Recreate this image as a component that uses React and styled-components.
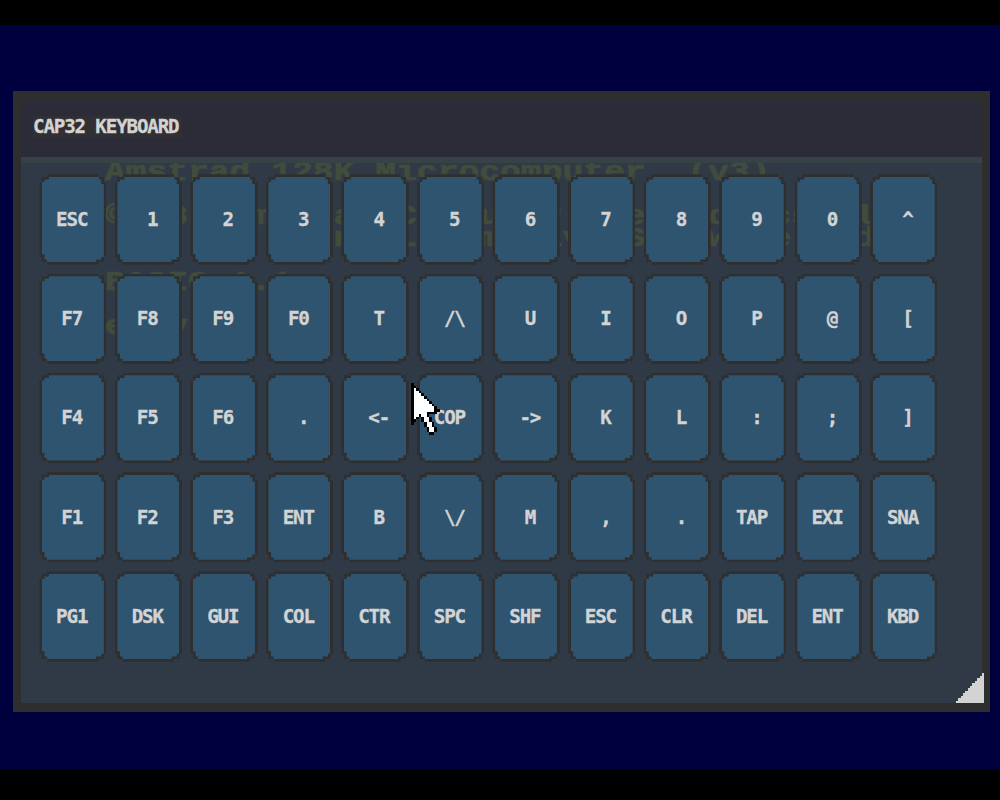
import styled, { createGlobalStyle } from "styled-components";

const rows = [
    ["ESC", "1", "2", "3", "4", "5", "6", "7", "8", "9", "0", "^"],
    ["F7", "F8", "F9", "F0", "T", "/\\", "U", "I", "O", "P", "@", "["],
    ["F4", "F5", "F6", ".", "<-", "COP", "->", "K", "L", ":", ";", "]"],
    ["F1", "F2", "F3", "ENT", "B", "\\/", "M", ",", ".", "TAP", "EXI", "SNA"],
    ["PG1", "DSK", "GUI", "COL", "CTR", "SPC", "SHF", "ESC", "CLR", "DEL", "ENT", "KBD"],
];

const bootText = `
 Amstrad 128K Microcomputer  (v3)

 ©1985 Amstrad Consumer Electronics plc
           and Locomotive Software Ltd.

 BASIC 1.1

Ready`.slice(1);

// X is the outline, a dot is the fill
const cursor = [
    "X",
    "XX",
    "X.X",
    "X..X",
    "X...X",
    "X....X",
    "X.....X",
    "X......X",
    "X.......X",
    "X........X",
    "X........XX",
    "X.....XXXX",
    "X..X..X",
    "X.X X..X",
    "XX  X..X",
    "X    X..X",
    "     X..X",
    "      X..X",
    "      X..X",
    "       XX",
];

// one letter keys and the arrows keep room for a leading blank
const isShort = (label) => label.length < 3 && !label.startsWith("F");

const Cursor = () => (
    <CursorSvg viewBox='0 0 11 20' shapeRendering='crispEdges'>
        {cursor.map((line, y) =>
            line.split("").map((c, x) =>
                c === " " ? null : (
                    <rect
                        key={x + "-" + y}
                        x={x}
                        y={y}
                        width='1'
                        height='1'
                        fill={c === "X" ? "#000" : "#fff"}
                    />
                )
            )
        )}
    </CursorSvg>
);

const Grip = () => (
    <GripSvg viewBox='0 0 11 12' preserveAspectRatio='none' shapeRendering='crispEdges'>
        {Array.from({ length: 12 }, (_, i) => (
            <rect key={i} x={Math.max(0, 10.2 - i * 0.93)} y={i} width='11' height='1' fill='#d3d3d3' />
        ))}
    </GripSvg>
);

const App = () => {
    return (
        <Screen>
            <GlobalStyle />
            <Border>
                <Window>
                    <TitleBar>
                        <Title>CAP32 KEYBOARD</Title>
                    </TitleBar>
                    <Body>
                        <Boot>{bootText}</Boot>
                        <Keys>
                            {rows.map((row, r) =>
                                row.map((label, c) => (
                                    <Key key={r + "-" + c}>
                                        <Label $short={isShort(label)}>{label}</Label>
                                    </Key>
                                ))
                            )}
                        </Keys>
                    </Body>
                    <Grip />
                    <Cursor />
                </Window>
            </Border>
        </Screen>
    );
};

const GlobalStyle = createGlobalStyle`
  body {
    margin: 0;
    background: #000;
    overflow: hidden;
  }

  * {
    box-sizing: border-box;
  }
`;

const Screen = styled.div`
  width: 1000px;
  height: 800px;
  padding: 25px 0 31px;
  background: #000;
`;

const Border = styled.div`
  height: 744px;
  padding: 66px 10px 57px 13px;
  background: #00003f;
`;

const Window = styled.div`
  position: relative;
  display: flex;
  flex-direction: column;
  height: 621px;
  border: 8px solid #2e2e2e;
  border-bottom-width: 9px;
  background: #303a46;
`;

const TitleBar = styled.div`
  display: flex;
  align-items: flex-start;
  flex: none;
  height: 64px;
  padding: 17px 0 0 12px;
  background: #2c2b38;
  border-bottom: 6px solid #364245;
`;

const Title = styled.div`
  width: 149px;
  height: 22px;
  background: #303034;
  color: #d3d3d3;
  font: bold 19.2px/21px "DejaVu Sans Mono", monospace;
  letter-spacing: -1.16px;
  white-space: pre;
  -webkit-text-stroke: 0.3px #d3d3d3;
`;

const Body = styled.div`
  display: grid;
  flex: 1;
  align-items: start;
  justify-items: start;
  overflow: hidden;
`;

const Boot = styled.pre`
  grid-area: 1 / 1;
  width: 0;
  margin: -1.5px 0 0 63px;
  color: #424c3c;
  font: bold 28px/22px "Liberation Mono", monospace;
  -webkit-text-stroke: 0.6px #424c3c;
  transform: scaleX(1.238);
  transform-origin: 0 0;
`;

const Keys = styled.div`
  position: relative;
  grid-area: 1 / 1;
  display: grid;
  grid-template-columns: repeat(12, 67.2px);
  grid-auto-rows: 90.4px;
  gap: 8.85px 8.35px;
  padding: 11.3px 0 0 18.3px;
`;

const Key = styled.div`
  position: relative;
  display: flex;
  align-items: center;
  justify-content: center;
  background: #2f2f2f;
  clip-path: polygon(
    8px 0, calc(100% - 8px) 0, calc(100% - 8px) 2.6px, calc(100% - 2.6px) 2.6px,
    calc(100% - 2.6px) 8px, 100% 8px, 100% calc(100% - 8px), calc(100% - 2.6px) calc(100% - 8px),
    calc(100% - 2.6px) calc(100% - 2.6px), calc(100% - 8px) calc(100% - 2.6px), calc(100% - 8px) 100%, 8px 100%,
    8px calc(100% - 2.6px), 2.6px calc(100% - 2.6px), 2.6px calc(100% - 8px), 0 calc(100% - 8px),
    0 8px, 2.6px 8px, 2.6px 2.6px, 8px 2.6px
  );

  &:before {
    content: "";
    position: absolute;
    inset: 2.6px;
    background: #2f5470;
    clip-path: polygon(
      7px 0, calc(100% - 5px) 0, calc(100% - 5px) 2.6px, calc(100% - 2.6px) 2.6px,
      calc(100% - 2.6px) 7px, 100% 7px, 100% calc(100% - 5.2px), calc(100% - 2.6px) calc(100% - 5.2px),
      calc(100% - 2.6px) calc(100% - 2.6px), calc(100% - 7.8px) calc(100% - 2.6px), calc(100% - 7.8px) 100%, 5.2px 100%,
      5.2px calc(100% - 2.6px), 2.6px calc(100% - 2.6px), 2.6px calc(100% - 7.8px), 0 calc(100% - 7.8px),
      0 5.2px, 2.6px 5.2px, 2.6px 2.6px, 7px 2.6px
    );
  }
`;

const Label = styled.span`
  position: relative;
  padding: ${(props) => (props.$short ? "1px 0 0 7.5px" : "1px 2.4px 0 0")};
  color: #d3d3d3;
  font: bold 19.2px/20px "DejaVu Sans Mono", monospace;
  letter-spacing: -1.16px;
  white-space: pre;
  -webkit-text-stroke: 0.3px #d3d3d3;
`;

const GripSvg = styled.svg`
  position: absolute;
  right: -2px;
  bottom: 0;
  width: 28px;
  height: 30px;
`;

const CursorSvg = styled.svg`
  position: absolute;
  left: 390px;
  top: 284px;
  width: 28.6px;
  height: 52px;
`;

export default App;
